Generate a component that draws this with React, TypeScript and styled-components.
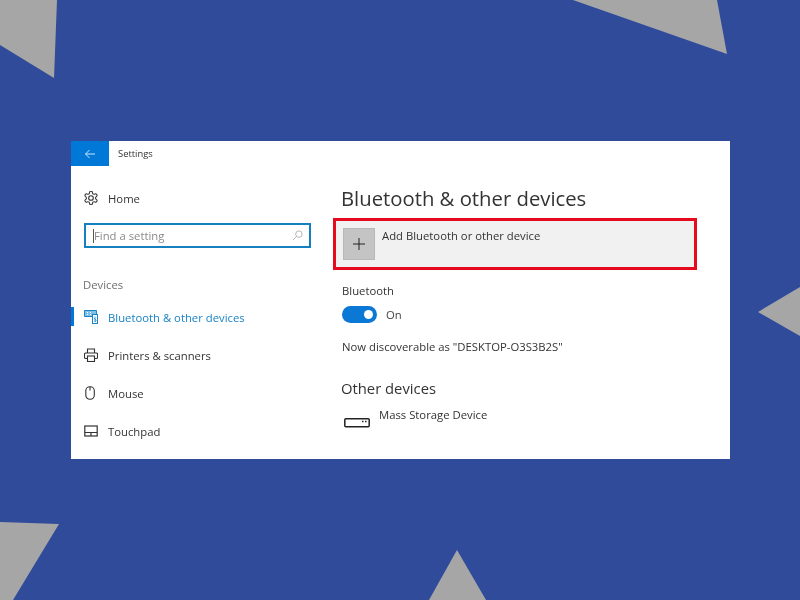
import React from "react";
import styled, { createGlobalStyle } from "styled-components";

const Global = createGlobalStyle`
  html, body { margin: 0; padding: 0; }
  body { font-family: "Open Sans", "Noto Sans", "Liberation Sans", sans-serif; background: #314b9b; }
`;

const Page = styled.div`
  position: relative;
  width: 800px;
  height: 600px;
  overflow: hidden;
  background: #314b9b;
  padding: 141px 70px 141px 71px;
  box-sizing: border-box;
`;

const Backdrop = styled.svg`
  position: absolute;
  left: 0;
  top: 0;
`;

const Window = styled.div`
  position: relative;
  width: 659px;
  height: 318px;
  background: #fff;
  display: flex;
  flex-direction: column;
  color: #2b2b2b;
  filter: blur(0.35px);
`;

const TitleBar = styled.div`
  height: 25px;
  display: flex;
  align-items: center;
  flex: none;
`;

const BackButton = styled.div`
  width: 38px;
  height: 25px;
  background: #0078d7;
  display: flex;
  align-items: center;
  justify-content: center;
`;

const TitleText = styled.span`
  margin-left: 9px;
  font-size: 9.4px;
  color: #333;
`;

const Body = styled.div`
  flex: 1;
  display: flex;
  min-height: 0;
`;

const Sidebar = styled.nav`
  width: 269px;
  flex: none;
  display: flex;
  flex-direction: column;
  padding-top: 22px;
  box-sizing: border-box;
`;

const NavList = styled.div`
  display: flex;
  flex-direction: column;
  gap: 18px;
`;

const NavRow = styled.div<{ $active?: boolean }>`
  position: relative;
  height: 20px;
  flex: none;
  display: flex;
  align-items: center;
  padding-left: 13px;
  font-size: 11.3px;
  color: ${(p) => (p.$active ? "#1883c6" : "#333")};
`;

const ActiveMark = styled.span`
  position: absolute;
  left: 0;
  top: 0;
  width: 3px;
  height: 19px;
  background: #0078d7;
`;

const NavIcon = styled.span`
  width: 24px;
  flex: none;
  display: flex;
  align-items: center;
`;

const Search = styled.div`
  margin: 15px 0 0 13px;
  width: 227px;
  height: 25px;
  flex: none;
  box-sizing: border-box;
  border: 2px solid #1580bf;
  display: flex;
  align-items: center;
  padding: 0 6px 0 7px;
  font-size: 11.3px;
  color: #8a8a8a;
  justify-content: space-between;
`;

const SearchText = styled.span`
  border-left: 1px solid #555;
  line-height: 14px;
`;

const GroupLabel = styled.div`
  margin: 29px 0 14px 12px;
  font-size: 11.3px;
  line-height: 16px;
  color: #707070;
`;

const Content = styled.main`
  flex: 1;
  display: flex;
  flex-direction: column;
  min-width: 0;
  padding-top: 18px;
`;

const Heading = styled.h1`
  margin: 0 0 0 1px;
  font-size: 20.3px;
  font-weight: 400;
  line-height: 28px;
  color: #333;
`;

const AddFrame = styled.div`
  margin: 6px 0 0 -7px;
  width: 364px;
  height: 52px;
  flex: none;
  box-sizing: border-box;
  border: 3px solid #e60a1e;
  background: #f1f1f1;
  display: flex;
  padding: 7px 0 0 7px;
  gap: 7px;
`;

const PlusTile = styled.div`
  width: 32px;
  height: 32px;
  background: #c4c4c4;
  border: 1px solid #b8b8b8;
  box-sizing: border-box;
  display: flex;
  align-items: center;
  justify-content: center;
`;

const AddLabel = styled.span`
  font-size: 11.3px;
  line-height: 16px;
  color: #333;
`;

const FieldLabel = styled.div`
  margin: 13px 0 0 2px;
  font-size: 11.3px;
  line-height: 16px;
  color: #333;
`;

const ToggleRow = styled.div`
  margin: 7px 0 0 2px;
  display: flex;
  align-items: center;
  gap: 9px;
  font-size: 11.3px;
  color: #444;
`;

const Toggle = styled.span`
  width: 35px;
  height: 17px;
  border-radius: 9px;
  background: #0b78d6;
  display: flex;
  align-items: center;
  justify-content: flex-end;
  padding-right: 4px;
  box-sizing: border-box;
`;

const Knob = styled.span`
  width: 9px;
  height: 9px;
  border-radius: 50%;
  background: #fff;
`;

const Discover = styled.div`
  margin: 16px 0 0 2px;
  font-size: 11.3px;
  line-height: 16px;
  color: #333;
`;

const SubHeading = styled.h2`
  margin: 23px 0 0 1px;
  font-size: 14.8px;
  font-weight: 400;
  line-height: 20px;
  color: #333;
`;

const DeviceRow = styled.div`
  margin: 9px 0 0 4px;
  display: flex;
  gap: 9px;
  font-size: 11.3px;
  line-height: 16px;
  color: #333;
`;

const DeviceIcon = styled.svg`
  margin-top: 10px;
  flex: none;
`;

const Gear = () => (
  <svg width="14" height="14" viewBox="1.5 1.5 21 21" fill="none" stroke="#333" strokeWidth="1.6">
    <path d="M12.22 2h-.44a2 2 0 0 0-2 2v.18a2 2 0 0 1-1 1.73l-.43.25a2 2 0 0 1-2 0l-.15-.08a2 2 0 0 0-2.73.73l-.22.38a2 2 0 0 0 .73 2.73l.15.1a2 2 0 0 1 1 1.72v.51a2 2 0 0 1-1 1.74l-.15.09a2 2 0 0 0-.73 2.73l.22.38a2 2 0 0 0 2.73.73l.15-.08a2 2 0 0 1 2 0l.43.25a2 2 0 0 1 1 1.73V20a2 2 0 0 0 2 2h.44a2 2 0 0 0 2-2v-.18a2 2 0 0 1 1-1.73l.43-.25a2 2 0 0 1 2 0l.15.08a2 2 0 0 0 2.73-.73l.22-.39a2 2 0 0 0-.73-2.73l-.15-.08a2 2 0 0 1-1-1.74v-.5a2 2 0 0 1 1-1.74l.15-.09a2 2 0 0 0 .73-2.73l-.22-.38a2 2 0 0 0-2.73-.73l-.15.08a2 2 0 0 1-2 0l-.43-.25a2 2 0 0 1-1-1.73V4a2 2 0 0 0-2-2z" />
    <circle cx="12" cy="12" r="3.500" />
  </svg>
);

const BluetoothDevices = () => (
  <svg width="14" height="14" viewBox="0 0 14 14" fill="none" stroke="#1883c6" strokeWidth="1">
    <path d="M0.500 0.500h12v6h-12z" fill="#7fbfe6" />
    <path d="M3 2.500h1M6 2.500h1M3 4.500h1M6 4.500h1" stroke="#fff" />
    <rect x="8.500" y="4.500" width="5" height="9" fill="#fff" />
    <path d="M11 6.500v5.500M9.800 8l2.400 2-1.200 2" strokeWidth="0.8" />
  </svg>
);

const Printer = () => (
  <svg width="14" height="14" viewBox="0 0 14 14" fill="none" stroke="#333" strokeWidth="1.1">
    <path d="M3.500 5V1h7v4" />
    <path d="M3.500 10.500H1.500a1 1 0 0 1-1-1V6a1 1 0 0 1 1-1h11a1 1 0 0 1 1 1v3.500a1 1 0 0 1-1 1h-2" />
    <rect x="3.500" y="8" width="7" height="5.500" />
  </svg>
);

const Mouse = () => (
  <svg width="14" height="14" viewBox="0 0 14 14" fill="none" stroke="#333" strokeWidth="1.100">
    <rect x="1.800" y="0.800" width="8.500" height="12.400" rx="4" />
    <path d="M6 1v3.500" />
  </svg>
);

const Touchpad = () => (
  <svg width="14" height="14" viewBox="0 0 14 14" fill="none" stroke="#333" strokeWidth="1.200">
    <rect x="0.800" y="2" width="12.400" height="10" />
    <path d="M1 8.500h12M7 8.500v3.500" />
  </svg>
);

const items = [
  { label: "Bluetooth & other devices", icon: <BluetoothDevices />, active: true },
  { label: "Printers & scanners", icon: <Printer /> },
  { label: "Mouse", icon: <Mouse /> },
  { label: "Touchpad", icon: <Touchpad /> },
];

export default function App() {
  return (
    <>
      <Global />
      <Page>
        <Backdrop width="800" height="600" viewBox="0 0 800 600">
          <g fill="#a6a6a6">
            <polygon points="0,0 57,0 54,78 0,45" />
            <polygon points="573,0 717,0 727,54" />
            <polygon points="758,312 800,287 800,336" />
            <polygon points="0,522 59,524 13,600 0,600" />
            <polygon points="457,550 429,600 486,600" />
          </g>
        </Backdrop>
        <Window>
          <TitleBar>
            <BackButton>
              <svg width="12" height="12" viewBox="0 0 12 12" fill="none" stroke="#cfe6f8" strokeWidth="1">
                <path d="M11 6H1.500M5.500 2L1.500 6l4 4" />
              </svg>
            </BackButton>
            <TitleText>Settings</TitleText>
          </TitleBar>
          <Body>
            <Sidebar>
              <NavRow>
                <NavIcon><Gear /></NavIcon>
                Home
              </NavRow>
              <Search>
                <SearchText>Find a setting</SearchText>
                <svg width="11" height="11" viewBox="0 0 12 12" fill="none" stroke="#b0b0b0" strokeWidth="1">
                  <circle cx="7.500" cy="4.500" r="3.500" />
                  <path d="M5 7l-4 4" />
                </svg>
              </Search>
              <GroupLabel>Devices</GroupLabel>
              <NavList>
                {items.map((it) => (
                  <NavRow key={it.label} $active={it.active}>
                    {it.active && <ActiveMark />}
                    <NavIcon>{it.icon}</NavIcon>
                    {it.label}
                  </NavRow>
                ))}
              </NavList>
            </Sidebar>
            <Content>
              <Heading>Bluetooth &amp; other devices</Heading>
              <AddFrame>
                <PlusTile>
                  <svg width="14" height="14" viewBox="0 0 14 14" stroke="#222" strokeWidth="1">
                    <path d="M7 1v12M1 7h12" />
                  </svg>
                </PlusTile>
                <AddLabel>Add Bluetooth or other device</AddLabel>
              </AddFrame>
              <FieldLabel>Bluetooth</FieldLabel>
              <ToggleRow>
                <Toggle><Knob /></Toggle>
                On
              </ToggleRow>
              <Discover>Now discoverable as "DESKTOP-O3S3B2S"</Discover>
              <SubHeading>Other devices</SubHeading>
              <DeviceRow>
                <DeviceIcon width="26" height="11" viewBox="0 0 26 11" fill="none" stroke="#222" strokeWidth="1.500">
                  <rect x="0.800" y="1.800" width="24.400" height="8" rx="1" />
                  <path d="M18 4.500h1.500M21 4.500h1.500" />
                </DeviceIcon>
                Mass Storage Device
              </DeviceRow>
            </Content>
          </Body>
        </Window>
      </Page>
    </>
  );
}
